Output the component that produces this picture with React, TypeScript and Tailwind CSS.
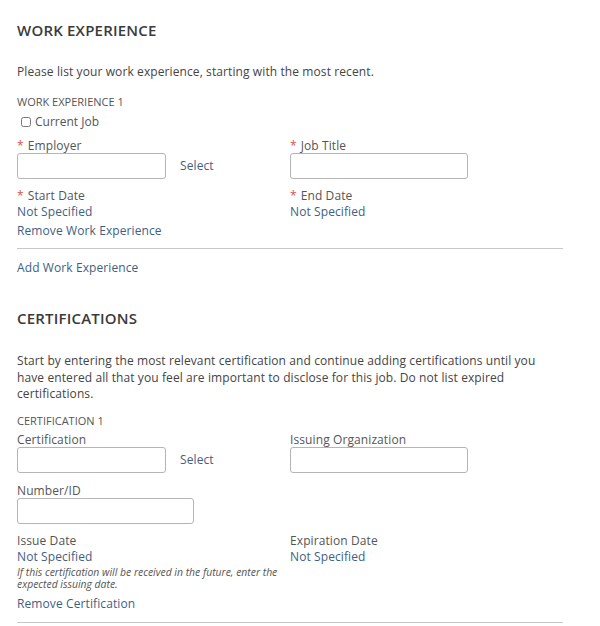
import React from 'react'

const font = { fontFamily: '"Open Sans", "Noto Sans", Arial, sans-serif' }

function Req() {
  return <span className="text-[#d9534f] mr-1">*</span>
}

function Label({ children, required, tight }: { children: React.ReactNode; required?: boolean; tight?: boolean }) {
  return (
    <div className={`text-[12px] leading-[16px] text-[#555] tracking-[0.1px] ${tight ? '-mb-px' : ''}`}>
      {required && <Req />}
      {children}
    </div>
  )
}

function TextBox({ w = 'w-[149px]' }: { w?: string }) {
  return <input type="text" className={`${w} h-[26px] border border-[#b5b5b5] rounded-[3px] bg-white block`} />
}

function LinkText({ children, className = '' }: { children: React.ReactNode; className?: string }) {
  return (
    <a className={`text-[12px] leading-[16px] text-[#3e5f84] tracking-[0.1px] cursor-pointer ${className}`}>{children}</a>
  )
}

export default function App() {
  return (
    <div className="bg-white w-[600px] h-[626px] overflow-hidden pl-[17px] pr-[37px]" style={font}>
      {/* Work experience */}
      <h2 className="pt-[20px] text-[15px] leading-[20px] font-semibold text-[#3a3a3a] tracking-[0.2px]">WORK EXPERIENCE</h2>
      <p className="mt-[24px] text-[12px] leading-[16px] text-[#444] tracking-[0.1px]">
        Please list your work experience, starting with the most recent.
      </p>
      <div className="mt-[15px] text-[11px] leading-[14px] text-[#555]">WORK EXPERIENCE 1</div>
      <label className="mt-[5px] flex items-center gap-[4px] text-[12px] leading-[16px] text-[#555]">
        <input type="checkbox" className="w-[10px] h-[10px] ml-[4px] accent-[#888]" />
        Current Job
      </label>

      <div className="mt-[8px] grid grid-cols-[273px_1fr]">
        <div>
          <Label required tight>Employer</Label>
          <div className="flex items-center">
            <TextBox />
            <LinkText className="ml-[14px]">Select</LinkText>
          </div>
        </div>
        <div>
          <Label required tight>Job Title</Label>
          <TextBox w="w-[178px]" />
        </div>
      </div>

      <div className="mt-[9px] grid grid-cols-[273px_1fr]">
        <div>
          <Label required>Start Date</Label>
          <LinkText className="block">Not Specified</LinkText>
        </div>
        <div>
          <Label required>End Date</Label>
          <LinkText className="block">Not Specified</LinkText>
        </div>
      </div>
      <LinkText className="block mt-[3px]">Remove Work Experience</LinkText>
      <hr className="mt-[9px] border-t border-[#c8c8c8]" />
      <LinkText className="block mt-[11px]">Add Work Experience</LinkText>

      {/* Certifications */}
      <h2 className="mt-[32px] text-[15px] leading-[20px] font-semibold text-[#3a3a3a] tracking-[0.2px]">CERTIFICATIONS</h2>
      <p className="mt-[25px] text-[12px] leading-[16.5px] text-[#444] pr-[10px] tracking-[0.1px]">
        Start by entering the most relevant certification and continue adding certifications until you have entered all that you feel are important to disclose for this job. Do not list expired certifications.
      </p>
      <div className="mt-[11px] text-[11px] leading-[14px] text-[#555]">CERTIFICATION 1</div>

      <div className="mt-[4px] grid grid-cols-[273px_1fr]">
        <div>
          <Label tight>Certification</Label>
          <div className="flex items-center">
            <TextBox />
            <LinkText className="ml-[14px]">Select</LinkText>
          </div>
        </div>
        <div>
          <Label tight>Issuing Organization</Label>
          <TextBox w="w-[178px]" />
        </div>
      </div>

      <div className="mt-[10px]">
        <Label tight>Number/ID</Label>
        <TextBox w="w-[177px]" />
      </div>

      <div className="mt-[9px] grid grid-cols-[273px_1fr]">
        <div>
          <Label>Issue Date</Label>
          <LinkText className="block">Not Specified</LinkText>
          <p className="mt-[1px] text-[10.4px] leading-[12px] italic text-[#555] w-[275px]">
            If this certification will be received in the future, enter the expected issuing date.
          </p>
        </div>
        <div>
          <Label>Expiration Date</Label>
          <LinkText className="block">Not Specified</LinkText>
        </div>
      </div>
      <LinkText className="block mt-[6px]">Remove Certification</LinkText>
      <hr className="mt-[10px] border-t border-[#c8c8c8]" />
    </div>
  )
}
